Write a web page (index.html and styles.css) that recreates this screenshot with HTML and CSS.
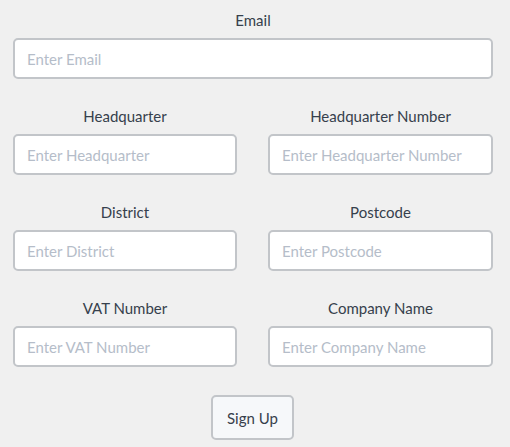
FILE: index.html
```html
<!DOCTYPE html>
<html>
<head>
<meta charset="utf-8">
<link rel="stylesheet" href="styles.css">
</head>
<body>
<form class="form">
  <div class="field full">
    <label class="label">Email</label>
    <input class="input" placeholder="Enter Email">
  </div>
  <div class="grid">
    <div class="field">
      <label class="label">Headquarter</label>
      <input class="input" placeholder="Enter Headquarter">
    </div>
    <div class="field">
      <label class="label">Headquarter Number</label>
      <input class="input" placeholder="Enter Headquarter Number">
    </div>
    <div class="field">
      <label class="label">District</label>
      <input class="input" placeholder="Enter District">
    </div>
    <div class="field">
      <label class="label">Postcode</label>
      <input class="input" placeholder="Enter Postcode">
    </div>
    <div class="field">
      <label class="label">VAT Number</label>
      <input class="input" placeholder="Enter VAT Number">
    </div>
    <div class="field">
      <label class="label">Company Name</label>
      <input class="input" placeholder="Enter Company Name">
    </div>
  </div>
  <div class="actions">
    <button type="button" class="btn">Sign Up</button>
  </div>
</form>
</body>
</html>
```
FILE: styles.css
```css
html, body {
  margin: 0;
  padding: 0;
  background: #f0f0f0;
}
body {
  font-family: Lato, "Open Sans", sans-serif;
  font-size: 15px;
  color: #36404c;
}
.form {
  padding: 11px 17px 0 13px;
  display: flex;
  flex-direction: column;
  gap: 28px;
}
.grid {
  display: grid;
  grid-template-columns: 224px 1fr;
  column-gap: 31px;
  row-gap: 28px;
}
.field {
  display: flex;
  flex-direction: column;
}
.label {
  display: block;
  text-align: center;
  line-height: 18px;
  margin-bottom: 9px;
  color: #36404c;
}
.input {
  box-sizing: border-box;
  height: 41px;
  width: 100%;
  border: 2px solid #c2c5c9;
  border-radius: 5px;
  background: #fff;
  padding: 0 12px;
  font-family: Lato, "Open Sans", sans-serif;
  font-size: 15px;
  color: #36404c;
  outline: none;
}
.input::placeholder {
  color: #b5bdc9;
}
.actions {
  display: flex;
  justify-content: center;
  padding-right: 1px;
}
.btn {
  box-sizing: border-box;
  width: 83px;
  height: 45px;
  border: 2px solid #c2c5c9;
  border-radius: 5px;
  background: #f6f8fa;
  font-family: Lato, "Open Sans", sans-serif;
  font-size: 15px;
  color: #36404c;
  padding: 0;
}
```
